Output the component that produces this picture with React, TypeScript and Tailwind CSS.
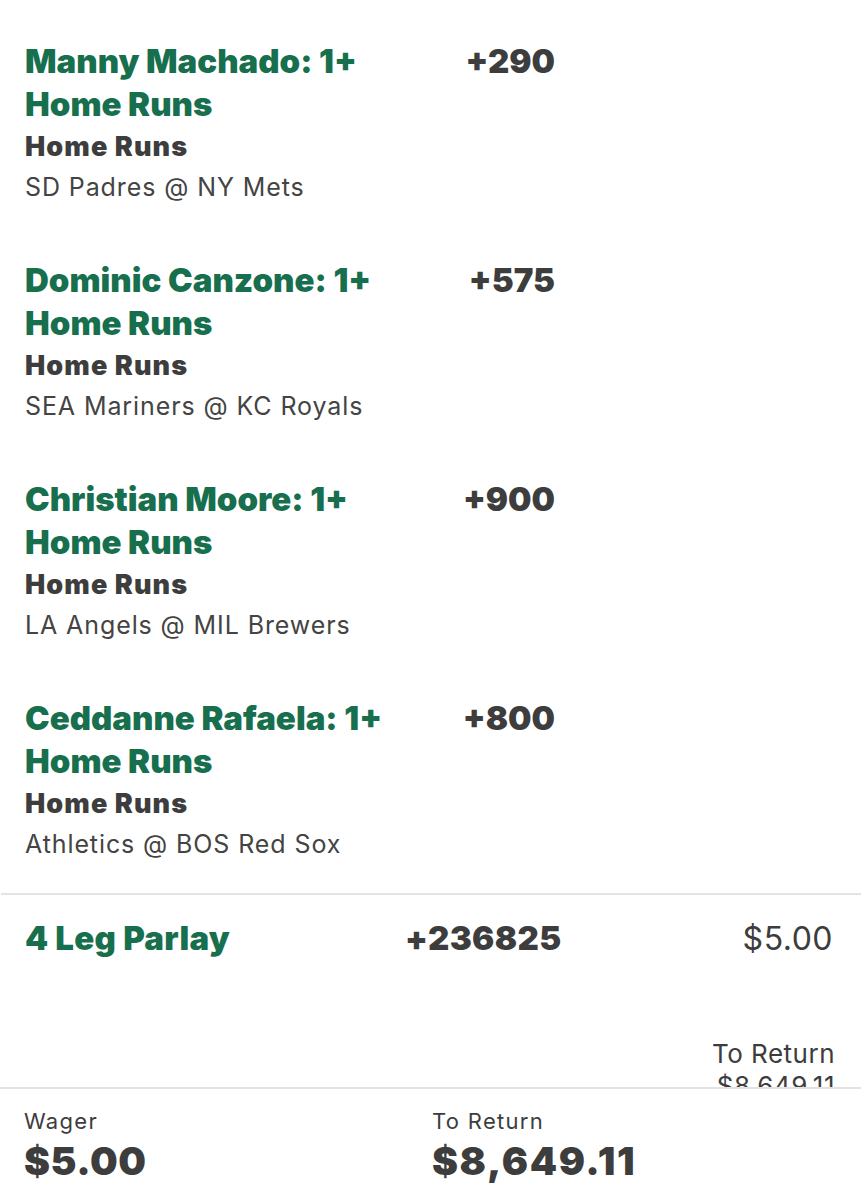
import React from 'react';

interface Leg {
  player: string;
  odds: string;
  game: string;
}

const legs: Leg[] = [
  { player: 'Manny Machado', odds: '+290', game: 'SD Padres @ NY Mets' },
  { player: 'Dominic Canzone', odds: '+575', game: 'SEA Mariners @ KC Royals' },
  { player: 'Christian Moore', odds: '+900', game: 'LA Angels @ MIL Brewers' },
  { player: 'Ceddanne Rafaela', odds: '+800', game: 'Athletics @ BOS Red Sox' },
];

export default function App() {
  return (
    <div
      className="relative w-[861px] h-[1200px] overflow-hidden bg-white"
      style={{ fontFamily: 'Inter, "Noto Sans", sans-serif' }}
    >
      {/* Legs */}
      <div className="pt-10">
        {legs.map((leg) => (
          <div key={leg.player} className="flex pl-[25px] h-[219px]">
            <div className="w-[400px]">
              <div className="text-[33px] leading-[43px] font-black text-[#176f4e]">
                {leg.player}: 1+ Home Runs
              </div>
              <div className="mt-[3px] text-[27px] leading-[36px] font-black tracking-[1.1px] text-[#3d3d3d]">
                Home Runs
              </div>
              <div className="mt-[4px] text-[25px] leading-[36px] tracking-[0.9px] text-[#444]">{leg.game}</div>
            </div>
            <div className="w-[130px] text-right text-[33px] leading-[43px] font-black text-[#3d3d3d]">
              {leg.odds}
            </div>
          </div>
        ))}
      </div>

      {/* Parlay */}
      <div className="mt-[-23px] border-t-2 border-[#e4e4e4] ml-[1px]">
        <div className="flex items-center pl-[24px] pr-[28px] pt-[22px]">
          <div className="w-[380px] text-[33px] leading-[43px] font-black tracking-[0.3px] text-[#176f4e]">4 Leg Parlay</div>
          <div className="text-[33px] leading-[43px] font-black tracking-[0.4px] text-[#3d3d3d]">+236825</div>
          <div className="flex-1 text-right text-[32px] leading-[43px] tracking-[0.5px] text-[#3d3d3d]">$5.00</div>
        </div>
        <div className="pr-[26px] pt-[78px] text-right text-[26px] leading-[32px] tracking-[0.5px] text-[#3d3d3d]">
          <div>To Return</div>
          <div>$8,649.11</div>
        </div>
      </div>

      {/* Bottom bar */}
      <div className="absolute left-0 right-0 bottom-0 h-[113px] bg-white border-t-2 border-[#e2e2e2] flex pl-[24px] pt-[18px]">
        <div className="w-[408px]">
          <div className="text-[22px] leading-[28px] tracking-[1.3px] text-[#3d3d3d]">Wager</div>
          <div className="mt-[2px] text-[39px] leading-[48px] font-black tracking-[0.5px] text-[#3d3d3d]">$5.00</div>
        </div>
        <div>
          <div className="text-[22px] leading-[28px] tracking-[1.3px] text-[#3d3d3d]">To Return</div>
          <div className="mt-[2px] text-[39px] leading-[48px] font-black tracking-[1.6px] text-[#3d3d3d]">$8,649.11</div>
        </div>
      </div>
    </div>
  );
}
